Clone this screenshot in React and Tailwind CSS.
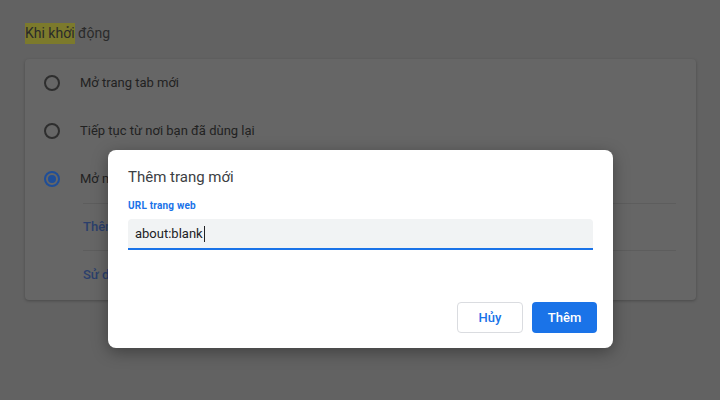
import React from "react";

function Radio({ checked }) {
  return checked ? (
    <span className="flex h-4 w-4 shrink-0 items-center justify-center rounded-full border-2 border-[#1f4e98]">
      <span className="h-2 w-2 rounded-full bg-[#1f4e98]" />
    </span>
  ) : (
    <span className="h-4 w-4 shrink-0 rounded-full border-2 border-[#2e2e2e]" />
  );
}

function Row({ checked, label }) {
  return (
    <div className="flex h-12 items-center gap-5 pl-[19px]">
      <Radio checked={checked} />
      <span className="text-[13px] text-[#222222]">{label}</span>
    </div>
  );
}

export default function App() {
  return (
    <div
      className="relative h-[400px] w-[720px] overflow-hidden bg-[#626262]"
      style={{ fontFamily: "Roboto, 'Noto Sans', sans-serif" }}
    >
      <div className="px-[25px] pt-[24px]">
        <div className="flex h-[19px] items-center text-[14px] text-[#2a2a2a]">
          <span className="bg-[#7c7a2c]">Khi khởi</span>
          <span>&nbsp;động</span>
        </div>
        <div className="mt-[16px] h-[241px] w-[671px] rounded bg-[#666666] shadow-[0_1px_3px_rgba(0,0,0,0.25)]">
          <Row label="Mở trang tab mới" />
          <Row label="Tiếp tục từ nơi bạn đã dùng lại" />
          <Row checked label="Mở một trang cụ thể hoặc tập hợp các trang" />
          <div className="ml-[58px] mr-[20px] border-t border-[#5d5d5d]">
            <div className="flex h-[46px] items-center text-[13px] font-medium text-[#2b3f6c]">
              Thêm trang mới
            </div>
          </div>
          <div className="ml-[58px] mr-[20px] border-t border-[#5d5d5d]">
            <div className="flex h-[47px] items-center text-[13px] font-medium text-[#2b3f6c]">
              Sử dụng các trang hiện tại
            </div>
          </div>
        </div>
      </div>

      <div className="absolute left-[108px] top-[150px] flex h-[198px] w-[505px] flex-col rounded-lg bg-white px-5 shadow-[0_4px_16px_rgba(0,0,0,0.35)]">
        <div className="mt-[17px] text-[15px] leading-[20px] text-[#3c4043]">Thêm trang mới</div>
        <div className="mt-[13px] text-[10px] font-bold leading-[12px] tracking-[0.2px] text-[#1a73e8]">
          URL trang web
        </div>
        <div className="mt-[7px] flex h-[31px] items-center rounded-t border-b-2 border-[#1a73e8] bg-[#f1f3f4] px-[7px]">
          <span className="text-[13px] text-[#202124]">about:blank</span>
          <span className="ml-[1px] h-[16px] w-[1px] bg-[#202124]" />
        </div>
        <div className="mt-auto mb-[15px] mr-[-4px] flex justify-end gap-[9px]">
          <button className="h-[31px] w-[66px] rounded border border-[#dadce0] bg-white text-[13px] font-medium text-[#1a73e8]">
            Hủy
          </button>
          <button className="h-[31px] w-[65px] rounded bg-[#1a73e8] text-[13px] font-medium text-white">
            Thêm
          </button>
        </div>
      </div>
    </div>
  );
}
